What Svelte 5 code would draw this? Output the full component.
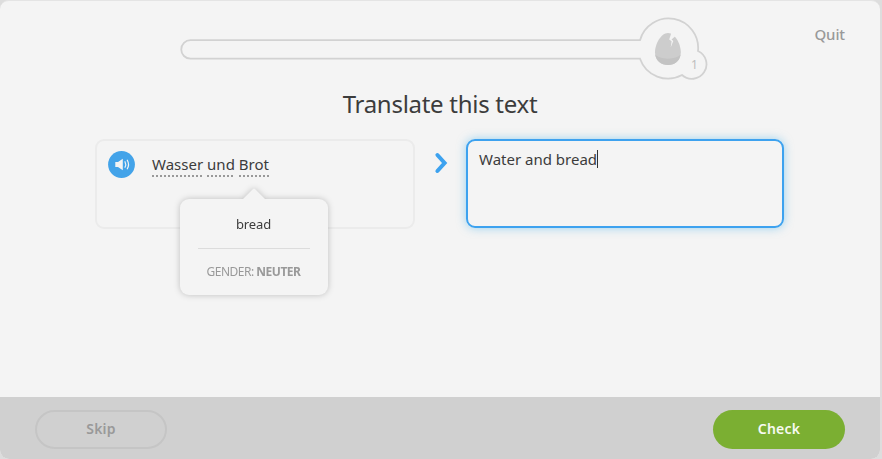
<script>
  const words = ['Wasser', 'und', 'Brot'];
  let answer = $state('Water and bread');
</script>

<div class="page">
  <main class="lesson">
    <header>
      <svg class="progress" width="530" height="64" viewBox="180 17 530 64" fill="none">
        <path d="M190.5 40.2H640A29.6 29.6 0 0 1 698 51A14.6 14.6 0 1 1 682 75A29.6 29.6 0 0 1 640 58.7H190.5A9.25 9.25 0 0 1 190.5 40.2Z" stroke="#d2d2d2" stroke-width="1.8" />
        <path d="M668 33C675 33 680.8 44 680.8 52.2C680.8 60 675.3 65 668 65S655 60 655 52.2C655 44 661 33 668 33Z" fill="#cdcdcd" />
        <path d="M655.2 54.5C660 60 676 60 680.6 54.5C679.7 61.2 674.5 65 668 65S656 61.2 655.2 54.5Z" fill="#c3c3c3" />
        <path d="M671.3 33L669.2 39.5L671.6 41.2L670.7 47.5L673.3 41.1L671.5 39.4L675 36.5L673.5 33Z" fill="#f4f4f4" />
        <text x="691" y="69">1</text>
      </svg>
      <span class="quit">Quit</span>
    </header>

    <h1>Translate this text</h1>

    <section class="exercise">
      <div class="source">
        <svg class="speaker" width="27" height="27" viewBox="0 0 27 27" fill="none">
          <circle cx="13.5" cy="13.5" r="13.4" fill="#43a3e9" />
          <path d="M7.3 11H10L14.8 7.8V19.2L10 16H7.3Z" fill="#f4f4f4" />
          <path d="M17 10.7Q18.5 13.5 17 16.3M19.3 9.2Q21.8 13.5 19.3 17.8" stroke="#f4f4f4" stroke-width="1.2" stroke-linecap="round" />
        </svg>
        <p class="sentence">
          {#each words as word}<span class="word">{word}</span>{/each}
        </p>
        <aside class="hint">
          <svg class="arrow" width="24" height="12" viewBox="0 0 24 12"><path d="M0 12L11 1Q12 0 13 1L24 12Z" fill="#f4f4f4" /></svg>
          <div class="meaning">bread</div>
          <div class="gender">GENDER: <b>NEUTER</b></div>
        </aside>
      </div>
      <svg class="chevron" width="14" height="22" viewBox="0 0 14 22" fill="none">
        <path d="M3.4 3L10.6 11L3.4 19" stroke="#3da2ef" stroke-width="4" stroke-linecap="round" />
      </svg>
      <div class="answer"><span>{answer}</span><i class="caret"></i></div>
    </section>
  </main>
  <footer>
    <button class="skip">Skip</button>
    <button class="check">Check</button>
  </footer>
</div>

<style>
  :global(body) { background: #dddddd; }
  .page {
    box-sizing: border-box;
    width: 880px;
    height: 459px;
    border-top: 1px solid #e4e4e4;
    border-radius: 9px;
    background: #f4f4f4;
    overflow: hidden;
    display: flex;
    flex-direction: column;
    font-family: "Noto Sans", sans-serif;
    color: #3c3c3c;
  }
  .lesson { height: 396px; }
  header { display: flex; padding: 17px 35px 0 180px; justify-content: space-between; height: 63px; }
  .progress { display: block; margin-top: -1px; }
  .progress text { font: 12px "Noto Sans", sans-serif; fill: #bdbdbd; }
  .quit { font-size: 15px; line-height: 20px; margin-top: 6px; color: #999; font-weight: 500; letter-spacing: -.1px; }
  h1 { margin: 6px 0 0; text-align: center; font-size: 24px; line-height: 34px; font-weight: 400; letter-spacing: -.28px; }
  .exercise { display: flex; margin: 18px 0 0 95px; }
  .source {
    box-sizing: border-box;
    position: relative;
    width: 320px;
    height: 90px;
    border: 2px solid #ebebeb;
    border-radius: 9px;
    display: flex;
    padding: 10px 11px;
  }
  .speaker { display: block; }
  .sentence { display: flex; gap: 4px; margin: 2px 0 0 17px; font-size: 15px; line-height: 22px; height: 24px; }
  .word {
    display: block;
    background: radial-gradient(circle at 1px 1px, #999 0 .8px, transparent 1.5px) 0 100% / 4px 2px repeat-x;
  }
  .hint {
    position: absolute;
    left: 82.5px;
    top: 58px;
    width: 148px;
    height: 96px;
    box-sizing: border-box;
    padding: 14px 18px;
    background: #f4f4f4;
    border-radius: 9px;
    filter: drop-shadow(0 0 3px rgba(0, 0, 0, .22));
    text-align: center;
  }
  .arrow { position: absolute; left: 62px; top: -11px; }
  .meaning { height: 35px; border-bottom: 1px solid #dcdcdc; font-size: 13px; line-height: 23px; letter-spacing: -.1px; }
  .gender { margin-top: 14px; font-size: 12px; line-height: 17px; color: #999; white-space: nowrap; letter-spacing: -.5px; }
  .gender b { font-weight: 700; }
  .chevron { display: block; margin: 13px 18px 0 19px; }
  .answer {
    box-sizing: border-box;
    width: 318px;
    height: 89px;
    border: 2px solid #3da2ef;
    border-radius: 9px;
    box-shadow: 0 0 10px rgba(61, 175, 235, .5);
    padding: 9px 11px;
    display: flex;
    font-size: 15px;
    line-height: 18px;
  }
  .caret { width: 1px; height: 18px; background: #333; }
  footer {
    box-sizing: border-box;
    height: 62px;
    padding: 13px 35px 0;
    background: #d0d0d0;
    display: flex;
    justify-content: space-between;
  }
  button {
    box-sizing: border-box;
    width: 132px;
    height: 39px;
    padding: 0 0 2px;
    border-radius: 20px;
    font: 600 14px "Noto Sans", sans-serif;
    letter-spacing: .2px;
  }
  .skip { border: 2px solid #c5c5c5; background: none; color: #999; }
  .check { border: 0; background: #7baf32; color: #f7faf2; }
</style>
